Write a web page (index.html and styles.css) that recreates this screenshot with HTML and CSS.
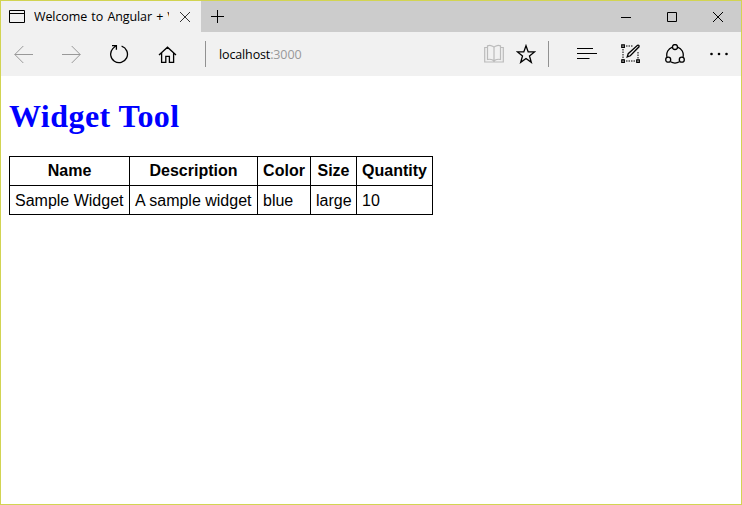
FILE: index.html
```html
<!DOCTYPE html>
<html lang="en">
<head>
<meta charset="utf-8">
<title>Widget Tool</title>
<link rel="stylesheet" href="styles.css">
</head>
<body>
<div class="window">
  <header class="titlebar">
    <div class="tab">
      <svg class="page-icon" width="16" height="13" viewBox="0 0 16 13"><path d="M.5.5h15v12H.5zM.5 3.5h15"/></svg>
      <span class="tab-title">Welcome to Angular + V</span>
      <svg class="tab-close" width="10" height="10" viewBox="0 0 10 10"><path d="M0 0l10 10M10 0L0 10"/></svg>
    </div>
    <svg class="new-tab" width="13" height="13" viewBox="0 0 13 13"><path d="M6.5 0v13M0 6.5h13"/></svg>
    <div class="controls">
      <svg width="10" height="10" viewBox="0 0 10 10"><path d="M0 5.5h10"/></svg>
      <svg width="10" height="10" viewBox="0 0 10 10"><path d="M.5.5h9v9h-9z"/></svg>
      <svg width="10" height="10" viewBox="0 0 10 10"><path d="M0 0l10 10M10 0L0 10"/></svg>
    </div>
  </header>
  <nav class="toolbar">
    <div class="nav-buttons">
      <svg class="disabled" width="20" height="20" viewBox="0 0 20 20"><path d="M19 10.5H.8M9.3 2L.8 10.5 9.3 19"/></svg>
      <svg class="disabled" width="20" height="20" viewBox="0 0 20 20"><path d="M0 10.5h18.2M9.7 2l8.5 8.5L9.7 19"/></svg>
      <svg width="20" height="20" viewBox="0 0 20 20"><path class="medium" d="M11.6 2.2A8.4 8.4 0 1 1 2.8 4.6L6 1.6M2 1.6h4.4v4.2"/></svg>
      <svg width="20" height="20" viewBox="0 0 20 20"><path class="medium" d="M1 11l8.5-7.8L18 11M3.6 9v9.4h4.2v-6h3.6v6h4.2V9"/></svg>
    </div>
    <span class="divider"></span>
    <div class="address">localhost<span class="port">:3000</span></div>
    <div class="page-buttons">
      <svg class="reading" width="20" height="20" viewBox="0 0 20 20"><path d="M10 3.2C8.5 1.2 5 1.2 3.5 1.9V15.5c2.500-.5 5-.3 6.500 1.500 1.500-1.800 4-2 6.500-1.500V1.900C15 1.200 11.500 1.200 10 3.200V17M3.500 3.500H.7V18h18.600V3.500H16.500"/></svg>
      <svg width="20" height="20" viewBox="0 0 20 20"><path class="star" d="M10 1.700l2.200 6.200h6.300l-5 4 1.800 6.400-5.300-3.800-5.300 3.800 1.800-6.400-5-4h6.300z"/></svg>
    </div>
    <span class="divider"></span>
    <div class="tools">
      <svg width="20" height="20" viewBox="0 0 20 20"><path d="M0 4.500h16M0 9.500h20M0 14.500h12.500"/></svg>
      <svg width="20" height="20" viewBox="0 0 20 20"><path class="dots" d="M5 2h7M2 5v11M5 17h11M17 8v8"/><path class="medium" d="M.8.8h2.500v2.500H.8zM.8 15.800h2.500v2.500H.8zM15.800 15.800h2.500v2.500h-2.500z"/><path class="medium" d="M6.200 12.900l1-3.200 9.300-8.400q2-.5 1.500 1.500l-8.700 9z"/></svg>
      <svg width="20" height="20" viewBox="0 0 20 20"><path class="medium" d="M7.300 3.100A8.300 8.300 0 0 0 2 13M12.700 3.100A8.300 8.300 0 0 1 18 13M5.500 17.800q4.500 2.500 9 0"/><g class="medium"><circle cx="10" cy="3" r="2.500"/><circle cx="3.200" cy="15.700" r="2.500"/><circle cx="16.800" cy="15.700" r="2.500"/></g></svg>
      <svg class="more" width="20" height="20" viewBox="0 0 20 20"><circle cx="2.500" cy="10" r="1.300"/><circle cx="10" cy="10" r="1.300"/><circle cx="17.500" cy="10" r="1.300"/></svg>
    </div>
  </nav>
  <main>
    <h1>Widget Tool</h1>
    <table>
      <thead><tr><th class="name">Name</th><th class="description">Description</th><th class="color">Color</th><th class="size">Size</th><th class="quantity">Quantity</th></tr></thead>
      <tbody><tr><td>Sample Widget</td><td>A sample widget</td><td>blue</td><td>large</td><td>10</td></tr></tbody>
    </table>
  </main>
</div>
</body>
</html>
```
FILE: styles.css
```css
* { box-sizing: border-box; }
body { margin: 0; background: #fff; }
svg { display: block; flex: none; fill: none; stroke: #000; stroke-width: 1; }
.window { height: 505px; border: 1px solid #d2d452; overflow: hidden; }
.titlebar { display: flex; align-items: center; height: 31px; background: #ccc; padding-right: 18px; }
.tab { display: flex; align-items: center; width: 200px; height: 31px; padding-left: 8px; background: #f1f1f1; }
.page-icon { margin-right: 9px; }
.tab-title { width: 135px; overflow: hidden; white-space: nowrap; font: 12.5px/20px "Open Sans", sans-serif; letter-spacing: -0.1px; word-spacing: 1.1px; color: #000; }
.tab-close { margin-left: 11px; stroke: #333; }
.new-tab { margin-left: 10px; }
.controls { display: flex; gap: 36px; margin-left: auto; }
.toolbar { display: flex; align-items: center; height: 44px; padding: 0 12px 0 13px; background: #f1f1f1; }
.nav-buttons { display: flex; gap: 28px; }
.disabled { stroke: #999; }
.medium { stroke-width: 1.3; }
.star { stroke-width: 1.3; }
.divider { width: 1px; height: 26px; background: #919191; }
.nav-buttons + .divider { margin-left: 27px; }
.address { flex: 1; margin-left: 13px; padding-top: 1px; font: 12.5px/20px "Open Sans", sans-serif; letter-spacing: -0.13px; }
.port { color: #999; }
.page-buttons { display: flex; gap: 12px; margin-right: 12px; }
.reading { stroke: #bbb; stroke-width: 1.2; }
.tools { display: flex; gap: 24px; margin-left: 28px; }
.dots { stroke-dasharray: 1.5 1; }
.more { fill: #000; stroke: none; }
main { padding: 0 8px; }
h1 { margin: 22px 0 21px; font: bold 32px/37px "Liberation Serif", serif; letter-spacing: 0.45px; color: #00f; }
table { border-collapse: collapse; table-layout: fixed; width: 424px; font: 16px/18px "Liberation Sans", sans-serif; }
th, td { height: 29px; padding: 5px; border: 1px solid #000; white-space: nowrap; }
th { text-align: center; }
td { padding: 6px 5px 4px; text-align: left; }
.name { width: 120px; }
.description { width: 128px; }
.color { width: 53px; }
.size { width: 46px; }
.quantity { width: 76px; }
```
